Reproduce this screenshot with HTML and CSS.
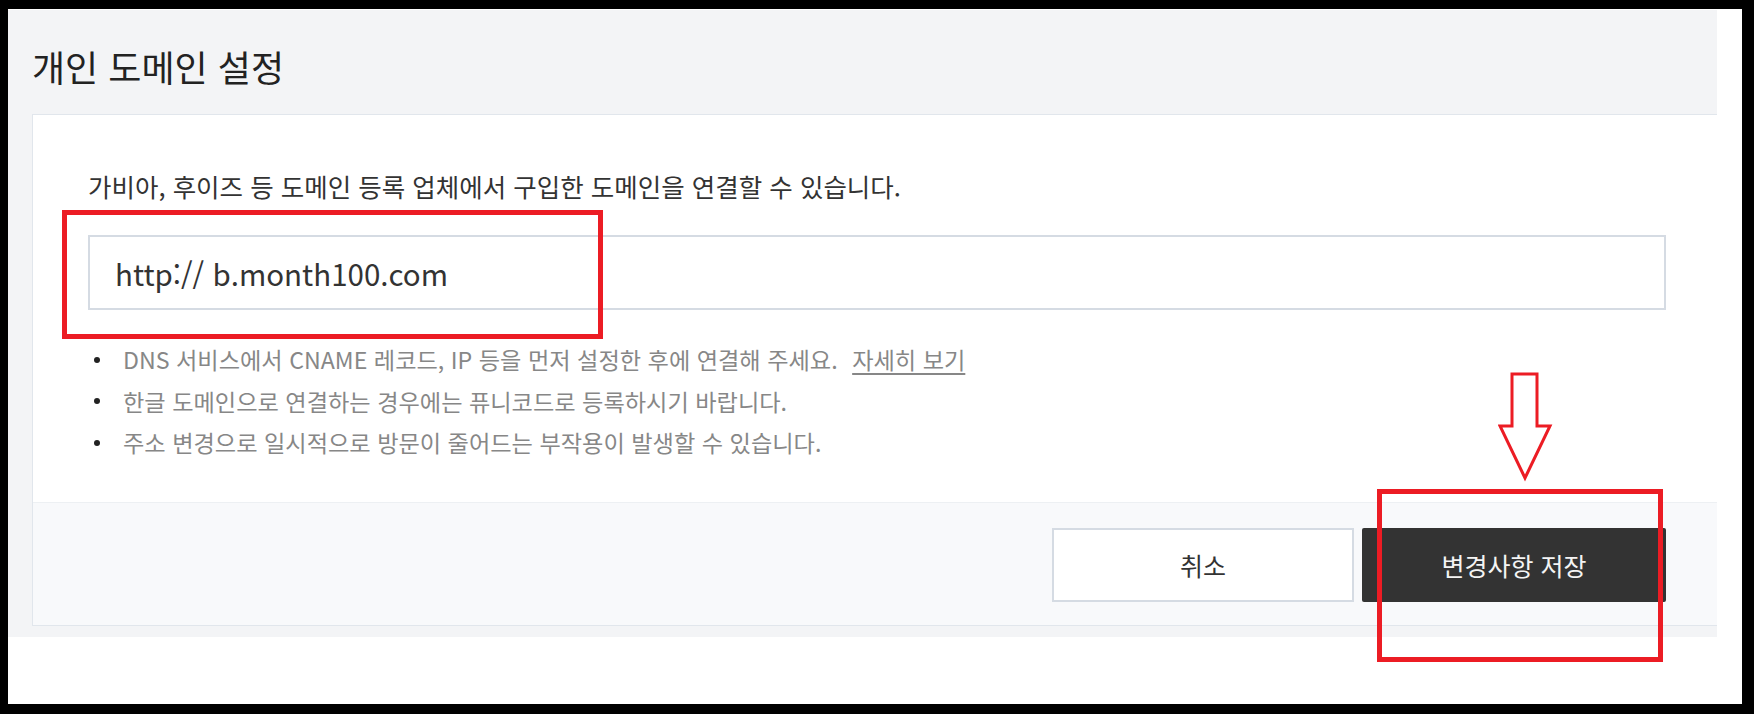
FILE: index.html
```html
<!DOCTYPE html>
<html lang="ko">
<head>
<meta charset="utf-8">
<title>개인 도메인 설정</title>
<link rel="stylesheet" href="styles.css">
</head>
<body>
<div class="sheet">
  <div class="panel">
    <h1 class="title">개인 도메인 설정</h1>
    <section class="card">
      <div class="card-body">
        <p class="desc">가비아, 후이즈 등 도메인 등록 업체에서 구입한 도메인을 연결할 수 있습니다.</p>
        <div class="domain-input">http:// b.month100.com</div>
        <ul class="notes">
          <li>DNS 서비스에서 CNAME 레코드, IP 등을 먼저 설정한 후에 연결해 주세요. <a class="more" href="#">자세히 보기</a></li>
          <li>한글 도메인으로 연결하는 경우에는 퓨니코드로 등록하시기 바랍니다.</li>
          <li>주소 변경으로 일시적으로 방문이 줄어드는 부작용이 발생할 수 있습니다.</li>
        </ul>
      </div>
      <div class="card-footer">
        <button class="btn btn-cancel" type="button">취소</button>
        <button class="btn btn-save" type="button">변경사항 저장</button>
      </div>
    </section>
  </div>
</div>
<div class="mark mark-input"></div>
<div class="mark mark-save"></div>
<svg class="mark-arrow" width="56" height="112" viewBox="0 0 56 112">
  <polygon points="14,3 39,3 39,55 52,55 27,107 2,55 14,55" fill="#fff" stroke="#ec1c24" stroke-width="3" stroke-linejoin="miter"/>
</svg>
</body>
</html>
```
FILE: styles.css
```css
html, body {
  height: 714px;
}
body {
  margin: 0;
  position: relative;
  background: #000;
  padding: 9px 12px 10px 8px;
  box-sizing: border-box;
  font-family: "Noto Sans CJK KR", "Noto Sans", sans-serif;
  overflow: hidden;
}
.sheet {
  background: #fff;
  height: 695px;
  padding: 1px 25px 0 0;
  box-sizing: border-box;
}
.panel {
  background: #f3f4f6;
  height: 627px;
  overflow: hidden;
  padding: 32px 0 0 24px;
  box-sizing: border-box;
}
.title {
  margin: 0 0 23px;
  font-size: 36px;
  line-height: 49px;
  font-weight: 400;
  color: #222;
}
.card {
  width: 1690px;
  background: #fff;
  border: 1px solid #e1e6ec;
  box-sizing: border-box;
}
.card-body {
  padding: 53px 55px 38px;
}
.desc {
  margin: 0 0 31px;
  font-size: 25.5px;
  line-height: 36px;
  color: #333;
}
.domain-input {
  height: 75px;
  box-sizing: border-box;
  border: 2px solid #d5dbe3;
  padding-left: 25px;
  display: flex;
  align-items: center;
  font-size: 29.5px;
  color: #333;
}
.notes {
  margin: 29px 0 0;
  padding: 0;
  list-style: none;
}
.notes li {
  display: flex;
  align-items: center;
  font-size: 23.2px;
  line-height: 41.5px;
  color: #878787;
  white-space: pre;
}
.notes li::before {
  content: "";
  width: 6px;
  height: 6px;
  border-radius: 50%;
  background: #222;
  margin: 0 23px 0 6px;
  flex: none;
}
.more {
  margin-left: 8px;
  color: #878787;
  text-decoration: underline;
  text-underline-offset: 4px;
}
.card-footer {
  border-top: 1px solid #edf0f3;
  background: #f8f9fb;
  padding: 25px 55px 23px;
  display: flex;
  justify-content: flex-end;
  gap: 8px;
}
.btn {
  height: 74px;
  font-family: inherit;
  font-size: 25px;
  box-sizing: border-box;
  cursor: pointer;
}
.btn-cancel {
  width: 302px;
  background: #fff;
  border: 2px solid #d5dbe3;
  color: #333;
}
.btn-save {
  width: 304px;
  background: #333;
  border: 0;
  border-radius: 2px;
  color: #f4f4f4;
}
.mark {
  position: absolute;
  border: 5px solid #ec1c24;
  box-sizing: border-box;
}
.mark-input {
  left: 62px;
  top: 210px;
  width: 541px;
  height: 129px;
}
.mark-save {
  left: 1377px;
  top: 489px;
  width: 286px;
  height: 173px;
}
.mark-arrow {
  position: absolute;
  left: 1498px;
  top: 371px;
}
```
